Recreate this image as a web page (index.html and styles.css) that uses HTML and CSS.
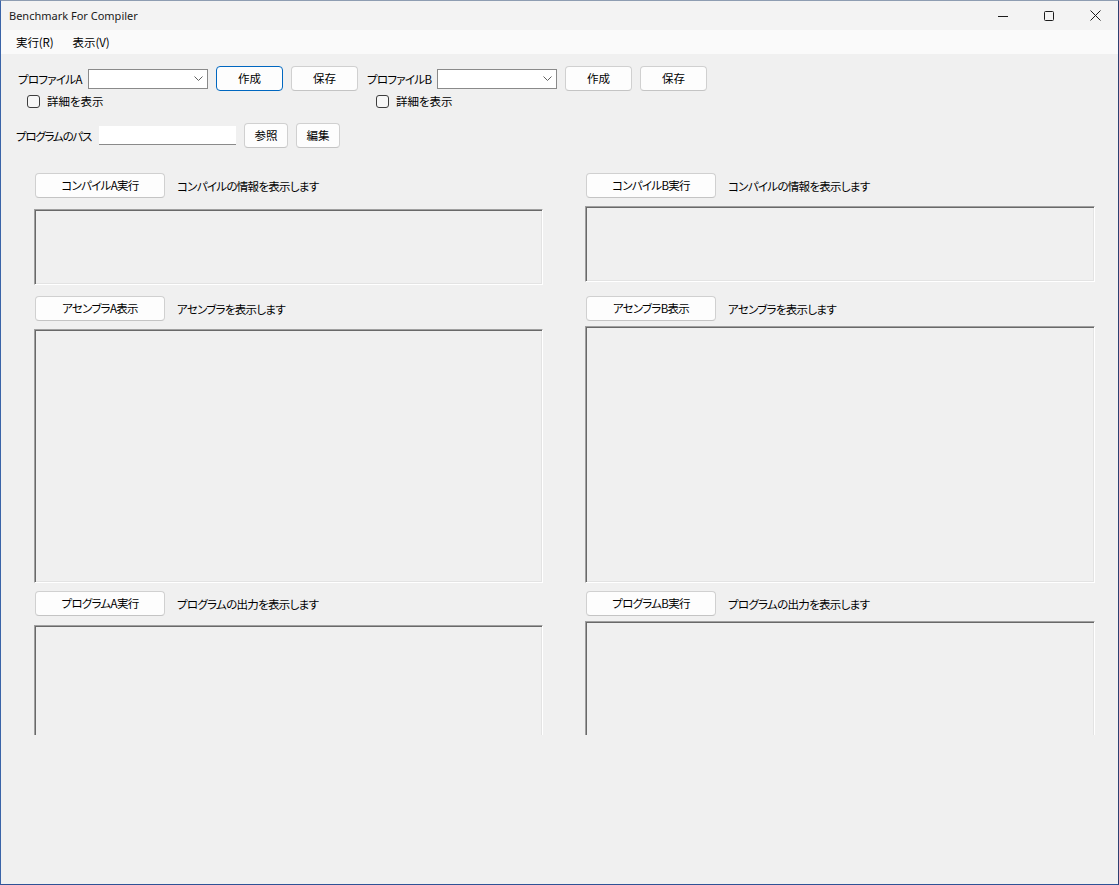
FILE: index.html
```html
<!DOCTYPE html>
<html lang="ja">
<head>
<meta charset="utf-8">
<title>Benchmark For Compiler</title>
<link rel="stylesheet" href="styles.css">
</head>
<body>
<div class="window">
  <div class="titlebar">
    <span class="title">Benchmark For Compiler</span>
    <div class="caption-buttons">
      <span class="cap"><svg width="10" height="10" viewBox="0 0 10 10"><path d="M0 5.5H10" stroke="#1b1b1b" stroke-width="1" fill="none"/></svg></span>
      <span class="cap"><svg width="10" height="10" viewBox="0 0 10 10"><rect x="0.5" y="0.5" width="9" height="9" rx="1" stroke="#1b1b1b" stroke-width="1" fill="none"/></svg></span>
      <span class="cap"><svg width="11" height="11" viewBox="0 0 11 11"><path d="M0.5 0.5L10.5 10.5M10.5 0.5L0.5 10.5" stroke="#1b1b1b" stroke-width="1" fill="none"/></svg></span>
    </div>
  </div>
  <div class="menubar">
    <span class="menu-item">実行(R)</span>
    <span class="menu-item">表示(V)</span>
  </div>
  <div class="client">
    <div class="profiles">
      <div class="profile">
        <div class="profile-row">
          <span class="profile-label">プロファイルA</span>
          <div class="combo"><svg width="9" height="5" viewBox="0 0 9 5"><path d="M0.5 0.5L4.5 4.5L8.5 0.5" stroke="#606060" stroke-width="1" fill="none"/></svg></div>
          <button class="btn btn-profile btn-focused">作成</button>
          <button class="btn btn-profile">保存</button>
        </div>
        <div class="check-row"><span class="checkbox"></span><span class="check-text">詳細を表示</span></div>
      </div>
      <div class="profile">
        <div class="profile-row">
          <span class="profile-label">プロファイルB</span>
          <div class="combo"><svg width="9" height="5" viewBox="0 0 9 5"><path d="M0.5 0.5L4.5 4.5L8.5 0.5" stroke="#606060" stroke-width="1" fill="none"/></svg></div>
          <button class="btn btn-profile">作成</button>
          <button class="btn btn-profile">保存</button>
        </div>
        <div class="check-row"><span class="checkbox"></span><span class="check-text">詳細を表示</span></div>
      </div>
    </div>

    <div class="path-row">
      <span class="path-label">プログラムのパス</span>
      <div class="path-input"></div>
      <button class="btn btn-small">参照</button>
      <button class="btn btn-small">編集</button>
    </div>

    <div class="panels">
      <div class="column column-a">
        <div class="section-head"><button class="btn btn-section">コンパイルA実行</button><span class="section-text">コンパイルの情報を表示します</span></div>
        <div class="textbox tb-compile-a"></div>
        <div class="section-head head-asm-a"><button class="btn btn-section">アセンブラA表示</button><span class="section-text">アセンブラを表示します</span></div>
        <div class="textbox tb-asm-a"></div>
        <div class="section-head head-prog"><button class="btn btn-section">プログラムA実行</button><span class="section-text">プログラムの出力を表示します</span></div>
        <div class="textbox tb-prog-a"></div>
      </div>
      <div class="column column-b">
        <div class="section-head"><button class="btn btn-section">コンパイルB実行</button><span class="section-text">コンパイルの情報を表示します</span></div>
        <div class="textbox tb-compile-b"></div>
        <div class="section-head head-asm-b"><button class="btn btn-section">アセンブラB表示</button><span class="section-text">アセンブラを表示します</span></div>
        <div class="textbox tb-asm-b"></div>
        <div class="section-head head-prog"><button class="btn btn-section">プログラムB実行</button><span class="section-text">プログラムの出力を表示します</span></div>
        <div class="textbox tb-prog-b"></div>
      </div>
    </div>
  </div>
</div>
</body>
</html>
```

FILE: styles.css
```css
* { box-sizing: border-box; }

html, body {
  margin: 0;
  padding: 0;
  background: #f0f0f0;
}

body {
  font-family: "Noto Sans CJK JP", "Noto Sans", sans-serif;
  font-size: 11.5px;
  letter-spacing: -0.7px;
  font-feature-settings: "palt";
  color: #000;
  white-space: nowrap;
}

.window {
  width: 1119px;
  height: 885px;
  display: flex;
  flex-direction: column;
  background: #f0f0f0;
  border: 1px solid #3a64a8;
  border-top-color: #8e9db2;
  border-right-color: #2d3f72;
  border-bottom-color: #2f5296;
  overflow: hidden;
}

/* Title bar */
.titlebar {
  height: 29px;
  flex: none;
  display: flex;
  align-items: center;
  background: #f3f3f3;
}

.title {
  font-family: "Noto Sans", "Open Sans", sans-serif;
  font-feature-settings: normal;
  letter-spacing: 0;
  font-size: 11px;
  padding-left: 8px;
  color: #1a1a1a;
  flex: 1;
  line-height: 29px;
}

.caption-buttons {
  display: flex;
  height: 29px;
}

.cap {
  width: 46px;
  height: 29px;
  display: flex;
  align-items: center;
  justify-content: center;
}

/* Menu bar */
.menubar {
  height: 24px;
  flex: none;
  display: flex;
  align-items: center;
  padding-left: 6px;
  background: #fafafa;
}

.menu-item {
  padding: 0 9px;
  margin-right: 1px;
  line-height: 24px;
  letter-spacing: -0.1px;
}

/* Client area */
.client {
  flex: 1;
  padding-top: 12px;
  display: flex;
  flex-direction: column;
}

.profiles {
  display: flex;
  padding-left: 16px;
  gap: 8px;
}

.profile {
  width: 341px;
  display: flex;
  flex-direction: column;
}

.profile-row {
  display: flex;
  align-items: center;
  height: 25px;
}

.profile-label {
  width: 71px;
  line-height: 16px;
  padding-left: 1px;
}

.combo {
  width: 120px;
  height: 20px;
  margin-right: 8px;
  background: #fff;
  border: 1px solid #8a8a8a;
  display: flex;
  align-items: center;
  justify-content: flex-end;
  padding-right: 4px;
}

.btn {
  font-family: inherit;
  font-size: 11.5px;
  letter-spacing: -0.7px;
  font-feature-settings: "palt";
  color: #000;
  background: #fdfdfd;
  border: 1px solid #d0d0d0;
  border-bottom-color: #c4c4c4;
  border-radius: 4px;
  height: 25px;
  padding: 0;
  line-height: 23px;
  text-align: center;
  flex: none;
}

.btn-profile {
  width: 67px;
  margin-right: 8px;
  letter-spacing: 0;
}

.btn-profile:last-child { margin-right: 0; }

.btn-focused {
  border: 1px solid #0067c0;
}

.check-row {
  display: flex;
  align-items: center;
  margin-top: 4px;
  margin-left: 10px;
  height: 13px;
}

.checkbox {
  width: 13px;
  height: 13px;
  border: 1px solid #3d3d3d;
  border-radius: 3px;
  background: #f7f7f7;
  margin-right: 7px;
  flex: none;
}

.check-text {
  line-height: 13px;
  letter-spacing: 0;
}

/* Path row */
.path-row {
  display: flex;
  align-items: center;
  margin-top: 15px;
  padding-left: 15px;
  height: 25px;
}

.path-label {
  width: 83px;
  letter-spacing: -1.2px;
}

.path-input {
  width: 137px;
  height: 19px;
  background: #fff;
  border-bottom: 1px solid #8a8a8a;
  margin-right: 8px;
}

.btn-small {
  width: 44px;
  margin-right: 8px;
  letter-spacing: 0;
}

/* Panels */
.panels {
  margin-top: 25px;
  padding-left: 33px;
  height: 562px;
  display: flex;
  gap: 42px;
  overflow: hidden;
  flex: none;
}

.column {
  display: flex;
  flex-direction: column;
}

.column-a { width: 509px; }
.column-b { width: 510px; }

.section-head {
  display: flex;
  align-items: center;
  height: 25px;
  flex: none;
}

.btn-section {
  width: 130px;
  margin-left: 1px;
  margin-right: 12px;
}

.textbox {
  flex: none;
  background: #f0f0f0;
  border: 1px solid;
  border-color: #a0a0a0 #ffffff #ffffff #a0a0a0;
  box-shadow: inset 1px 1px 0 #696969, inset -1px -1px 0 #e3e3e3;
}

.tb-compile-a { margin-top: 11px; height: 76px; }
.head-asm-a { margin-top: 11px; }
.tb-asm-a { margin-top: 8px; height: 254px; }
.tb-prog-a { margin-top: 9px; height: 200px; }

.tb-compile-b { margin-top: 8px; height: 76px; }
.head-asm-b { margin-top: 14px; }
.tb-asm-b { margin-top: 5px; height: 257px; }
.tb-prog-b { margin-top: 5px; height: 200px; }

.head-prog { margin-top: 8px; }
```
